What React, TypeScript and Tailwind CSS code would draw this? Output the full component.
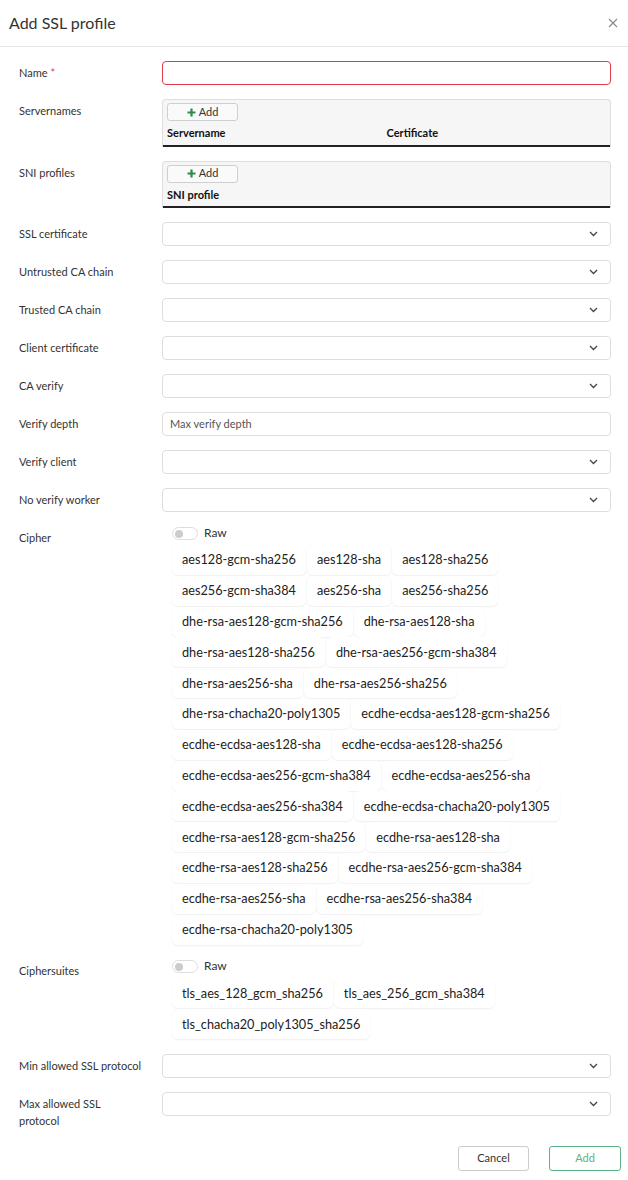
import React from 'react';

const CIPHERS = [
  'aes128-gcm-sha256',
  'aes128-sha',
  'aes128-sha256',
  'aes256-gcm-sha384',
  'aes256-sha',
  'aes256-sha256',
  'dhe-rsa-aes128-gcm-sha256',
  'dhe-rsa-aes128-sha',
  'dhe-rsa-aes128-sha256',
  'dhe-rsa-aes256-gcm-sha384',
  'dhe-rsa-aes256-sha',
  'dhe-rsa-aes256-sha256',
  'dhe-rsa-chacha20-poly1305',
  'ecdhe-ecdsa-aes128-gcm-sha256',
  'ecdhe-ecdsa-aes128-sha',
  'ecdhe-ecdsa-aes128-sha256',
  'ecdhe-ecdsa-aes256-gcm-sha384',
  'ecdhe-ecdsa-aes256-sha',
  'ecdhe-ecdsa-aes256-sha384',
  'ecdhe-ecdsa-chacha20-poly1305',
  'ecdhe-rsa-aes128-gcm-sha256',
  'ecdhe-rsa-aes128-sha',
  'ecdhe-rsa-aes128-sha256',
  'ecdhe-rsa-aes256-gcm-sha384',
  'ecdhe-rsa-aes256-sha',
  'ecdhe-rsa-aes256-sha384',
  'ecdhe-rsa-chacha20-poly1305',
];

const SUITES = ['tls_aes_128_gcm_sha256', 'tls_aes_256_gcm_sha384', 'tls_chacha20_poly1305_sha256'];

const Row: React.FC<{ label: React.ReactNode; children: React.ReactNode }> = ({ label, children }) => (
  <div className="flex">
    <div className="w-[143px] shrink-0 pt-[3px] pr-[19px] text-[11px] leading-[17px] text-[#333]">{label}</div>
    <div className="flex-1 min-w-0">{children}</div>
  </div>
);

const Select: React.FC = () => (
  <div className="h-6 rounded border border-[#dedede] bg-white flex items-center justify-end pr-[12px]">
    <svg width="9" height="6" viewBox="0 0 9 6" fill="none">
      <path d="M1 1l3.5 3.5L8 1" stroke="#444" strokeWidth="1.3" />
    </svg>
  </div>
);

const AddBtn: React.FC = () => (
  <div className="w-[71px] h-[18px] rounded-[3px] border border-[#cfcfcf] bg-[#fafafa] flex items-center justify-center gap-[3px] text-[11px] text-[#333]">
    <svg width="9" height="9" viewBox="0 0 9 9">
      <path d="M4.5 0.5v8M0.5 4.5h8" stroke="#2e8b4e" strokeWidth="2.2" />
    </svg>
    <span>Add</span>
  </div>
);

const Toggle: React.FC = () => (
  <div className="flex items-center h-[14px] gap-[6px] pl-[10px]">
    <div className="w-[26px] h-[13px] rounded-full border border-[#ddd] bg-white relative">
      <div className="absolute left-[2px] top-[2px] w-[8px] h-[8px] rounded-full bg-[#ccc]" />
    </div>
    <span className="text-[12px] text-[#333]">Raw</span>
  </div>
);

const Chips: React.FC<{ items: string[] }> = ({ items }) => (
  <div className="flex flex-wrap pl-[10px] pr-[40px] mt-[5px]">
    {items.map((c) => (
      <div
        key={c}
        className="h-[30px] mr-[1px] mb-[0.8px] px-[10px] flex items-center rounded-md bg-white text-[12.7px] text-[#222] shadow-[0_1px_2px_rgba(0,0,0,0.07)]"
      >
        {c}
      </div>
    ))}
  </div>
);

const TableBox: React.FC<{ cols: string[] }> = ({ cols }) => (
  <div className="rounded-t border border-[#dedede] border-b-0 bg-[#f6f6f6]">
    <div className="px-[4px] pt-[3px]">
      <AddBtn />
    </div>
    <div className="flex px-[4px] pt-[4px] pb-[3px] border-b-2 border-[#222] text-[11px] font-bold text-[#111]">
      {cols.map((c) => (
        <div key={c} className="flex-1">
          {c}
        </div>
      ))}
    </div>
  </div>
);

export default function App() {
  return (
    <div className="w-[628px] min-h-[1180px] bg-white font-['Lato','Liberation_Sans',sans-serif]">
      <div className="h-[47px] border-b border-[#e5e5e5] flex items-center justify-between pl-[9px] pr-[5px]">
        <h1 className="text-[16px] text-[#333]">Add SSL profile</h1>
        <svg width="20" height="20" viewBox="0 0 20 20">
          <path d="M6 6l8 8M14 6l-8 8" stroke="#888" strokeWidth="1.1" />
        </svg>
      </div>

      <div className="pl-[19px] pr-[17px] pt-[14px] flex flex-col gap-[14px]">
        <Row
          label={
            <>
              Name <span className="text-[#e03c4b]">*</span>
            </>
          }
        >
          <div className="h-6 rounded border border-[#e03c4b] bg-white" />
        </Row>
        <Row label="Servernames">
          <TableBox cols={['Servername', 'Certificate']} />
        </Row>
        <Row label="SNI profiles">
          <TableBox cols={['SNI profile']} />
        </Row>
        <Row label="SSL certificate">
          <Select />
        </Row>
        <Row label="Untrusted CA chain">
          <Select />
        </Row>
        <Row label="Trusted CA chain">
          <Select />
        </Row>
        <Row label="Client certificate">
          <Select />
        </Row>
        <Row label="CA verify">
          <Select />
        </Row>
        <Row label="Verify depth">
          <div className="h-6 rounded border border-[#dedede] bg-white flex items-center px-[7px] text-[11px] text-[#555]">
            Max verify depth
          </div>
        </Row>
        <Row label="Verify client">
          <Select />
        </Row>
        <Row label="No verify worker">
          <Select />
        </Row>
        <Row label="Cipher">
          <Toggle />
          <Chips items={CIPHERS} />
        </Row>
        <Row label="Ciphersuites">
          <Toggle />
          <Chips items={SUITES} />
        </Row>
        <Row label="Min allowed SSL protocol">
          <Select />
        </Row>
        <Row label="Max allowed SSL protocol">
          <Select />
        </Row>
      </div>

      <div className="flex justify-end gap-[20px] pr-[7px] pt-[17px]">
        <button className="w-[71px] h-[25px] rounded-[3px] border border-[#ccc] bg-white text-[11px] text-[#333]">
          Cancel
        </button>
        <button className="w-[72px] h-[25px] rounded-[3px] border border-[#5db389] bg-white text-[11px] text-[#5db389]">
          Add
        </button>
      </div>
    </div>
  );
}
